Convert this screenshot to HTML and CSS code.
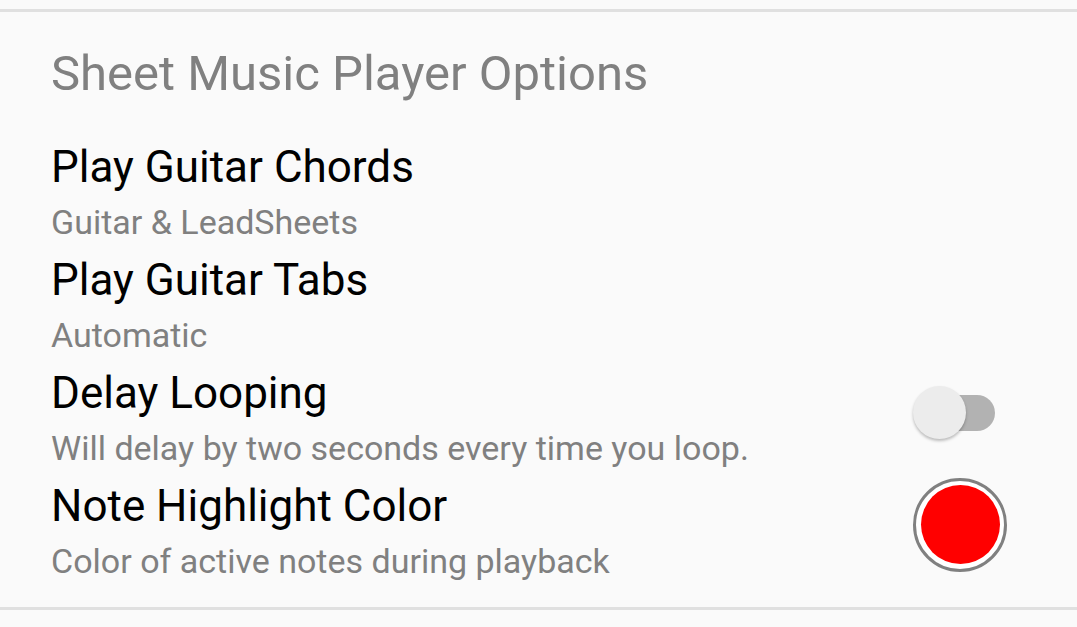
FILE: index.html
```html
<!DOCTYPE html>
<html lang="en">
<head>
    <meta charset="UTF-8">
    <title>Sheet Music Player Options</title>
    <link rel="stylesheet" href="styles.css">
</head>
<body>
    <div class="panel">
        <h1 class="panel-title">Sheet Music Player Options</h1>

        <div class="option">
            <div class="option-text">
                <div class="option-name">Play Guitar Chords</div>
                <div class="option-desc">Guitar &amp; LeadSheets</div>
            </div>
        </div>

        <div class="option">
            <div class="option-text">
                <div class="option-name">Play Guitar Tabs</div>
                <div class="option-desc">Automatic</div>
            </div>
        </div>

        <div class="option">
            <div class="option-text">
                <div class="option-name">Delay Looping</div>
                <div class="option-desc">Will delay by two seconds every time you loop.</div>
            </div>
            <div class="option-widget">
                <div class="switch">
                    <span class="switch-track"></span>
                    <span class="switch-thumb"></span>
                </div>
            </div>
        </div>

        <div class="option">
            <div class="option-text">
                <div class="option-name">Note Highlight Color</div>
                <div class="option-desc">Color of active notes during playback</div>
            </div>
            <div class="option-widget">
                <div class="color-swatch"><span class="color-fill"></span></div>
            </div>
        </div>
    </div>
</body>
</html>
```

FILE: styles.css
```css
/* Page */
body {
    margin: 0;
    background: #fafafa;
    font-family: Roboto, "Noto Sans", sans-serif;
}

/* Settings panel */
.panel {
    margin-top: 9px;
    border-top: 3px solid #e0e0e0;
    border-bottom: 3px solid #e0e0e0;
    padding: 32px 70px 0 51px;
    box-sizing: border-box;
    height: 601px;
}

.panel-title {
    margin: 0 0 36px 0;
    font-size: 49px;
    font-weight: 400;
    line-height: 60px;
    color: #808080;
}

/* Option rows */
.option {
    display: flex;
    align-items: center;
    padding-bottom: 3px;
}

.option-text {
    flex: 1;
}

.option-name {
    font-size: 44px;
    line-height: 54px;
    color: #000;
}

.option-desc {
    font-size: 34px;
    line-height: 56px;
    color: #808080;
}

.option-widget {
    width: 94px;
    display: flex;
    justify-content: flex-start;
}

/* Toggle switch (off) */
.switch {
    position: relative;
    width: 82px;
    height: 53px;
    margin-top: -17px;
}

.switch-track {
    position: absolute;
    left: 26px;
    right: 0;
    top: 9px;
    height: 36px;
    border-radius: 18px;
    background: #b2b2b2;
}

.switch-thumb {
    position: absolute;
    left: 0;
    top: 0;
    width: 53px;
    height: 53px;
    border-radius: 50%;
    background: #ececec;
    box-shadow: 0 2px 3px rgba(0, 0, 0, 0.25);
}

/* Color preview */
.color-swatch {
    width: 94px;
    height: 94px;
    box-sizing: border-box;
    border: 3px solid #808080;
    border-radius: 50%;
    background: #fff;
    display: flex;
    align-items: center;
    justify-content: center;
    margin-top: -19px;
}

.color-fill {
    width: 79px;
    height: 79px;
    border-radius: 50%;
    background: #ff0000;
}
```
